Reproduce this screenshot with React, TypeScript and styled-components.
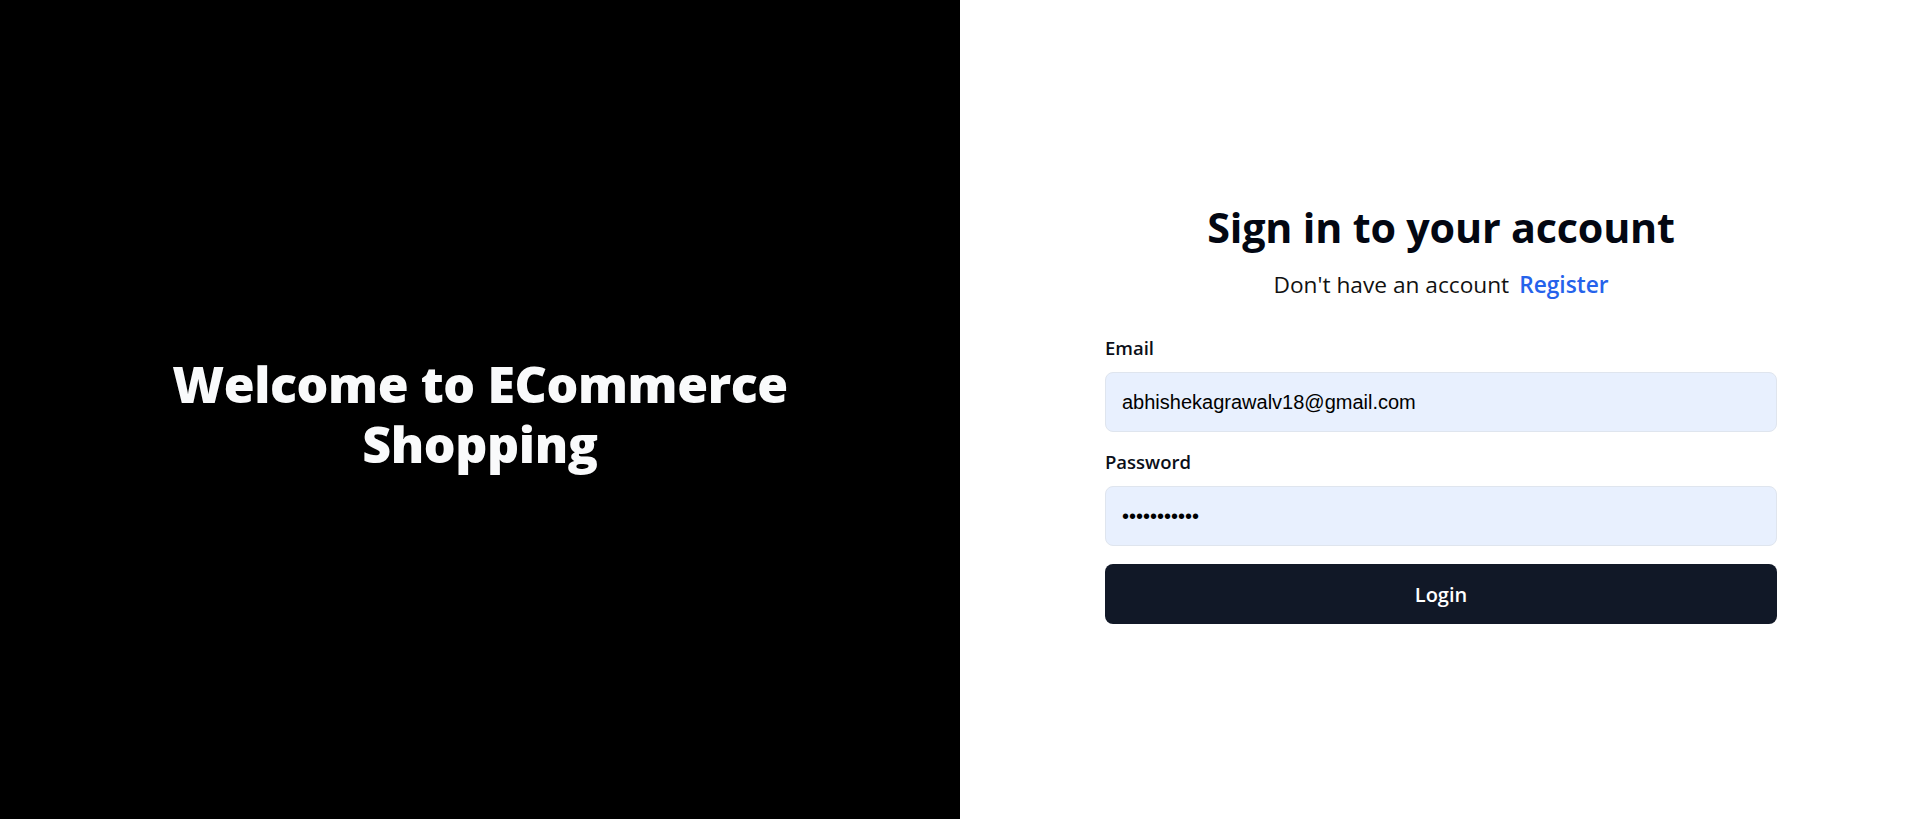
import React from "react";
import styled, { createGlobalStyle } from "styled-components";

const GlobalStyle = createGlobalStyle`
  * { box-sizing: border-box; }
  html, body { margin: 0; padding: 0; }
  body { font-family: "Open Sans", "Noto Sans", sans-serif; background: #ffffff; }
`;

const Page = styled.div`
  display: flex;
  width: 100%;
  height: 819px;
`;

const Hero = styled.section`
  flex: 0 0 960px;
  background: #000000;
  display: flex;
  align-items: center;
  justify-content: center;
  padding-top: 8px;
`;

const HeroTitle = styled.h1`
  margin: 0;
  max-width: 660px;
  color: #f9fafb;
  font-family: "Open Sans", sans-serif;
  font-weight: 800;
  font-size: 50px;
  line-height: 60px;
  text-align: center;
  letter-spacing: -0.4px;
`;

const AuthPanel = styled.section`
  flex: 1;
  background: #ffffff;
  display: flex;
  align-items: center;
  justify-content: center;
  padding-left: 11px;
  padding-top: 6px;
`;

const AuthCard = styled.div`
  width: 672px;
  display: flex;
  flex-direction: column;
`;

const Header = styled.div`
  text-align: center;
  margin-bottom: 36px;
`;

const Heading = styled.h2`
  margin: 2px 0 19px;
  color: #030712;
  font-weight: 700;
  font-size: 41.3px;
  line-height: 48px;
  letter-spacing: -0.2px;
`;

const Subtitle = styled.p`
  margin: 0;
  color: #111111;
  font-size: 22.7px;
  line-height: 30px;
`;

const RegisterLink = styled.a`
  margin-left: 10px;
  color: #2563eb;
  font-weight: 600;
  text-decoration: none;
  cursor: pointer;
`;

const Form = styled.form`
  display: flex;
  flex-direction: column;
  gap: 18px;
`;

const Field = styled.div`
  display: flex;
  flex-direction: column;
  gap: 12px;
`;

const Label = styled.label`
  color: #0b0f19;
  font-size: 18.5px;
  font-weight: 600;
  line-height: 24px;
`;

const Input = styled.input`
  height: 60px;
  width: 100%;
  padding: 0 16px;
  border: 1px solid #dfe5ee;
  border-radius: 8px;
  background: #e8f0fe;
  color: #000000;
  font-family: "Liberation Sans", Arial, sans-serif;
  font-size: 20px;
  outline: none;
`;

const SubmitButton = styled.button`
  height: 60px;
  width: 100%;
  border: none;
  border-radius: 8px;
  background: #111827;
  color: #ffffff;
  font-family: "Open Sans", sans-serif;
  font-size: 20px;
  font-weight: 600;
  cursor: pointer;
`;

export default function App() {
  return (
    <>
      <GlobalStyle />
      <Page>
        <Hero>
          <HeroTitle>Welcome to ECommerce Shopping</HeroTitle>
        </Hero>
        <AuthPanel>
          <AuthCard>
            <Header>
              <Heading>Sign in to your account</Heading>
              <Subtitle>
                Don't have an account
                <RegisterLink>Register</RegisterLink>
              </Subtitle>
            </Header>
            <Form onSubmit={(e) => e.preventDefault()}>
              <Field>
                <Label htmlFor="email">Email</Label>
                <Input id="email" type="email" defaultValue="abhishekagrawalv18@gmail.com" />
              </Field>
              <Field>
                <Label htmlFor="password">Password</Label>
                <Input id="password" type="password" defaultValue="abhishek123" />
              </Field>
              <SubmitButton type="submit">Login</SubmitButton>
            </Form>
          </AuthCard>
        </AuthPanel>
      </Page>
    </>
  );
}
